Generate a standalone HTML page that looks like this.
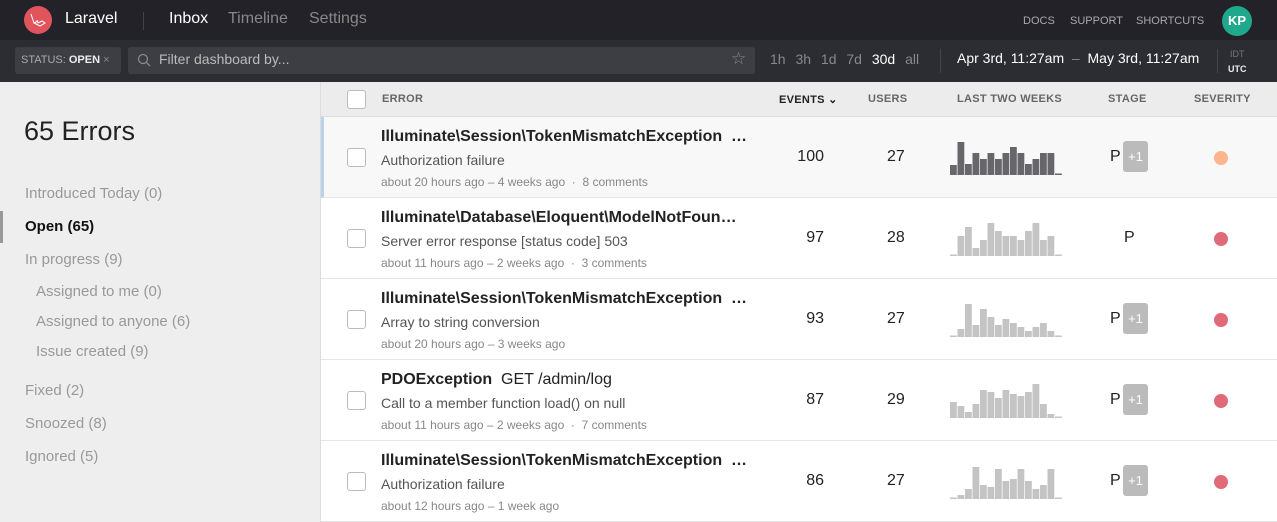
<!DOCTYPE html>
<html><head><meta charset="utf-8"><style>
*{margin:0;padding:0;box-sizing:border-box}
body{width:1277px;height:522px;overflow:hidden;font-family:"Liberation Sans",sans-serif;background:#fff;position:relative}
.a{position:absolute;white-space:nowrap}
#top{position:absolute;left:0;top:0;width:1277px;height:40px;background:#222228}
#bar{position:absolute;left:0;top:40px;width:1277px;height:42px;background:#2c2c33}
#side{position:absolute;left:0;top:82px;width:321px;height:440px;background:#efeeee;border-right:1px solid #ddd}
#th{position:absolute;left:321px;top:82px;width:956px;height:35px;background:#ececec;border-bottom:1px solid #ddd}
.row{position:absolute;left:321px;width:956px;height:81px;border-bottom:1px solid #e6e6e6}
.cb{position:absolute;left:26px;width:19px;height:19px;border:1px solid #bbb;border-radius:3px;background:#fff}
.t{font-size:16px;font-weight:bold;color:#222}
.s{font-size:14px;color:#555}
.m{font-size:12px;color:#888}
.hd{font-size:11px;font-weight:bold;color:#666;letter-spacing:.3px}
.nav{font-size:16px;color:#999}
.num{font-size:16px;color:#222}
.p1{position:absolute;width:25px;height:31px;background:#bbb;border-radius:3px;color:#fff;font-size:13px;text-align:center;line-height:31px}
.dot{position:absolute;width:14px;height:14px;border-radius:50%}
</style></head><body>
<div id="top">
 <div class="a" style="left:24px;top:6px;width:28px;height:28px;border-radius:50%;background:#e0545e"></div>
 <svg class="a" style="left:29px;top:12px" width="18" height="16" viewBox="0 0 18 16"><path d="M2 2l3 9 6 3 5-3-3-2-4 2-1-3M5 11l4-2" stroke="#fff" stroke-width="1" fill="none"/></svg>
 <div class="a" style="left:65px;top:10px;color:#fff;font-size:16px">Laravel</div>
 <div class="a" style="left:143px;top:12px;width:1px;height:18px;background:#444"></div>
 <div class="a" style="left:169px;top:10px;color:#fff;font-size:16px">Inbox</div>
 <div class="a" style="left:228px;top:10px;color:#888;font-size:16px">Timeline</div>
 <div class="a" style="left:309px;top:10px;color:#888;font-size:16px">Settings</div>
 <div class="a" style="left:1023px;top:15px;color:#aaa;font-size:11px">DOCS</div>
 <div class="a" style="left:1070px;top:15px;color:#aaa;font-size:11px">SUPPORT</div>
 <div class="a" style="left:1136px;top:15px;color:#aaa;font-size:11px">SHORTCUTS</div>
 <div class="a" style="left:1222px;top:6px;width:30px;height:30px;border-radius:50%;background:#20a88c;color:#fff;font-weight:bold;font-size:13px;text-align:center;line-height:30px">KP</div>
</div>
<div id="bar">
 <div class="a" style="left:15px;top:7px;width:106px;height:27px;background:#3d3d44;border-radius:3px;font-size:11px;color:#aaa;line-height:27px;padding-left:6px">STATUS: <b style="color:#eee">OPEN</b> <span style="color:#888">×</span></div>
 <div class="a" style="left:128px;top:7px;width:627px;height:27px;background:#3d3d44;border-radius:3px"></div>
 <svg class="a" style="left:137px;top:13px" width="14" height="14"><circle cx="6" cy="6" r="4.5" stroke="#888" fill="none" stroke-width="1.3"/><path d="M9.5 9.5l3.5 3.5" stroke="#888" stroke-width="1.3"/></svg>
 <div class="a" style="left:159px;top:11px;color:#bbb;font-size:14px">Filter dashboard by...</div>
 <div class="a" style="left:731px;top:9px;color:#888;font-size:17px">☆</div>
 <div class="a" style="left:770px;top:11px;color:#888;font-size:14px;word-spacing:6px">1h 3h 1d 7d <span style="color:#fff">30d</span> all</div>
 <div class="a" style="left:940px;top:9px;width:1px;height:24px;background:#444"></div>
 <div class="a" style="left:957px;top:10px;color:#fff;font-size:14px">Apr 3rd, 11:27am <span style="color:#888">&nbsp;–&nbsp;</span> May 3rd, 11:27am</div>
 <div class="a" style="left:1217px;top:9px;width:1px;height:24px;background:#444"></div>
 <div class="a" style="left:1230px;top:9px;color:#777;font-size:9px">IDT</div>
 <div class="a" style="left:1228px;top:24px;color:#eee;font-size:9px;font-weight:bold">UTC</div>
</div>
<div id="side">
 <div class="a" style="left:24px;top:34px;font-size:27px;color:#222">65 Errors</div>
 <div class="a" style="left:25px;top:103px;font-size:15px;color:#999">Introduced Today (0)</div>
 <div class="a" style="left:0;top:129px;width:3px;height:32px;background:#999"></div>
 <div class="a" style="left:25px;top:136px;font-size:15px;color:#111;font-weight:bold">Open (65)</div>
 <div class="a" style="left:25px;top:169px;font-size:15px;color:#999">In progress (9)</div>
 <div class="a" style="left:36px;top:201px;font-size:15px;color:#999">Assigned to me (0)</div>
 <div class="a" style="left:36px;top:231px;font-size:15px;color:#999">Assigned to anyone (6)</div>
 <div class="a" style="left:36px;top:261px;font-size:15px;color:#999">Issue created (9)</div>
 <div class="a" style="left:25px;top:300px;font-size:15px;color:#999">Fixed (2)</div>
 <div class="a" style="left:25px;top:333px;font-size:15px;color:#999">Snoozed (8)</div>
 <div class="a" style="left:25px;top:366px;font-size:15px;color:#999">Ignored (5)</div>
</div>
<div id="th">
 <div class="cb" style="top:8px"></div>
 <div class="a hd" style="left:61px;top:11px">ERROR</div>
 <div class="a hd" style="left:458px;top:11px;color:#222">EVENTS ⌄</div>
 <div class="a hd" style="left:547px;top:11px">USERS</div>
 <div class="a hd" style="left:636px;top:11px">LAST TWO WEEKS</div>
 <div class="a hd" style="left:787px;top:11px">STAGE</div>
 <div class="a hd" style="left:873px;top:11px">SEVERITY</div>
</div>

<div class="row" style="top:117px;background:#f8f8f8;border-left:3px solid #b9d3ea">
 <div class="cb" style="left:23px;top:31px"></div>
 <div class="a t" style="left:57px;top:11px">Illuminate\Session\TokenMismatchException &nbsp;…</div>
 <div class="a s" style="left:57px;top:35px">Authorization failure</div>
 <div class="a m" style="left:57px;top:58px">about 20 hours ago – 4 weeks ago &nbsp;·&nbsp; 8 comments</div>
 <div class="a num" style="left:453px;top:31px;width:47px;text-align:right">100</div>
 <div class="a num" style="left:563px;top:31px">27</div>
 <svg class="a" style="left:626px;top:23px" width="114" height="36" id="c1"></svg>
 <div class="a num" style="left:786px;top:31px">P</div>
 <div class="p1" style="left:799px;top:24px">+1</div>
 <div class="dot" style="left:890px;top:34px;background:#fdb58e"></div>
</div>
<div class="row" style="top:198px">
 <div class="cb" style="top:31px"></div>
 <div class="a t" style="left:60px;top:11px">Illuminate\Database\Eloquent\ModelNotFoun…</div>
 <div class="a s" style="left:60px;top:35px">Server error response [status code] 503</div>
 <div class="a m" style="left:60px;top:58px">about 11 hours ago – 2 weeks ago &nbsp;·&nbsp; 3 comments</div>
 <div class="a num" style="left:456px;top:31px;width:47px;text-align:right">97</div>
 <div class="a num" style="left:566px;top:31px">28</div>
 <svg class="a" style="left:629px;top:23px" width="114" height="36"></svg>
 <div class="a num" style="left:803px;top:31px">P</div>
 <div class="dot" style="left:893px;top:34px;background:#e06a78"></div>
</div>
<div class="row" style="top:279px">
 <div class="cb" style="top:31px"></div>
 <div class="a t" style="left:60px;top:11px">Illuminate\Session\TokenMismatchException &nbsp;…</div>
 <div class="a s" style="left:60px;top:35px">Array to string conversion</div>
 <div class="a m" style="left:60px;top:58px">about 20 hours ago – 3 weeks ago</div>
 <div class="a num" style="left:456px;top:31px;width:47px;text-align:right">93</div>
 <div class="a num" style="left:566px;top:31px">27</div>
 <svg class="a" style="left:629px;top:23px" width="114" height="36"></svg>
 <div class="a num" style="left:789px;top:31px">P</div>
 <div class="p1" style="left:802px;top:24px">+1</div>
 <div class="dot" style="left:893px;top:34px;background:#e06a78"></div>
</div>
<div class="row" style="top:360px">
 <div class="cb" style="top:31px"></div>
 <div class="a t" style="left:60px;top:11px">PDOException &nbsp;<span style="font-weight:normal">GET /admin/log</span></div>
 <div class="a s" style="left:60px;top:35px">Call to a member function load() on null</div>
 <div class="a m" style="left:60px;top:58px">about 11 hours ago – 2 weeks ago &nbsp;·&nbsp; 7 comments</div>
 <div class="a num" style="left:456px;top:31px;width:47px;text-align:right">87</div>
 <div class="a num" style="left:566px;top:31px">29</div>
 <svg class="a" style="left:629px;top:23px" width="114" height="36"></svg>
 <div class="a num" style="left:789px;top:31px">P</div>
 <div class="p1" style="left:802px;top:24px">+1</div>
 <div class="dot" style="left:893px;top:34px;background:#e06a78"></div>
</div>
<div class="row" style="top:441px">
 <div class="cb" style="top:31px"></div>
 <div class="a t" style="left:60px;top:11px">Illuminate\Session\TokenMismatchException &nbsp;…</div>
 <div class="a s" style="left:60px;top:35px">Authorization failure</div>
 <div class="a m" style="left:60px;top:58px">about 12 hours ago – 1 week ago</div>
 <div class="a num" style="left:456px;top:31px;width:47px;text-align:right">86</div>
 <div class="a num" style="left:566px;top:31px">27</div>
 <svg class="a" style="left:629px;top:23px" width="114" height="36"></svg>
 <div class="a num" style="left:789px;top:31px">P</div>
 <div class="p1" style="left:802px;top:24px">+1</div>
 <div class="dot" style="left:893px;top:34px;background:#e06a78"></div>
</div>
<script>
var data=[[10,33,11,22,16,22,16,22,28,22,11,16,22,22,0],
[0,20,29,8,16,33,25,20,20,16,25,33,16,20,0],
[0,8,33,12,28,20,12,18,14,10,6,10,14,6,0],
[16,12,6,14,28,26,20,28,24,22,26,34,14,4,0],
[0,4,10,32,14,12,30,18,20,30,18,10,14,30,0]];
var svgs=document.querySelectorAll('svg[width="114"]');
svgs.forEach(function(s,i){var col=i==0?'#67666b':'#c4c4c4';var h='';
data[i].forEach(function(v,j){var x=j*7.5;var hh=Math.max(v,1.5);h+='<rect x="'+x+'" y="'+(35-hh)+'" width="6.8" height="'+hh+'" fill="'+col+'"/>';});
s.innerHTML=h;});
</script>
</body></html>
